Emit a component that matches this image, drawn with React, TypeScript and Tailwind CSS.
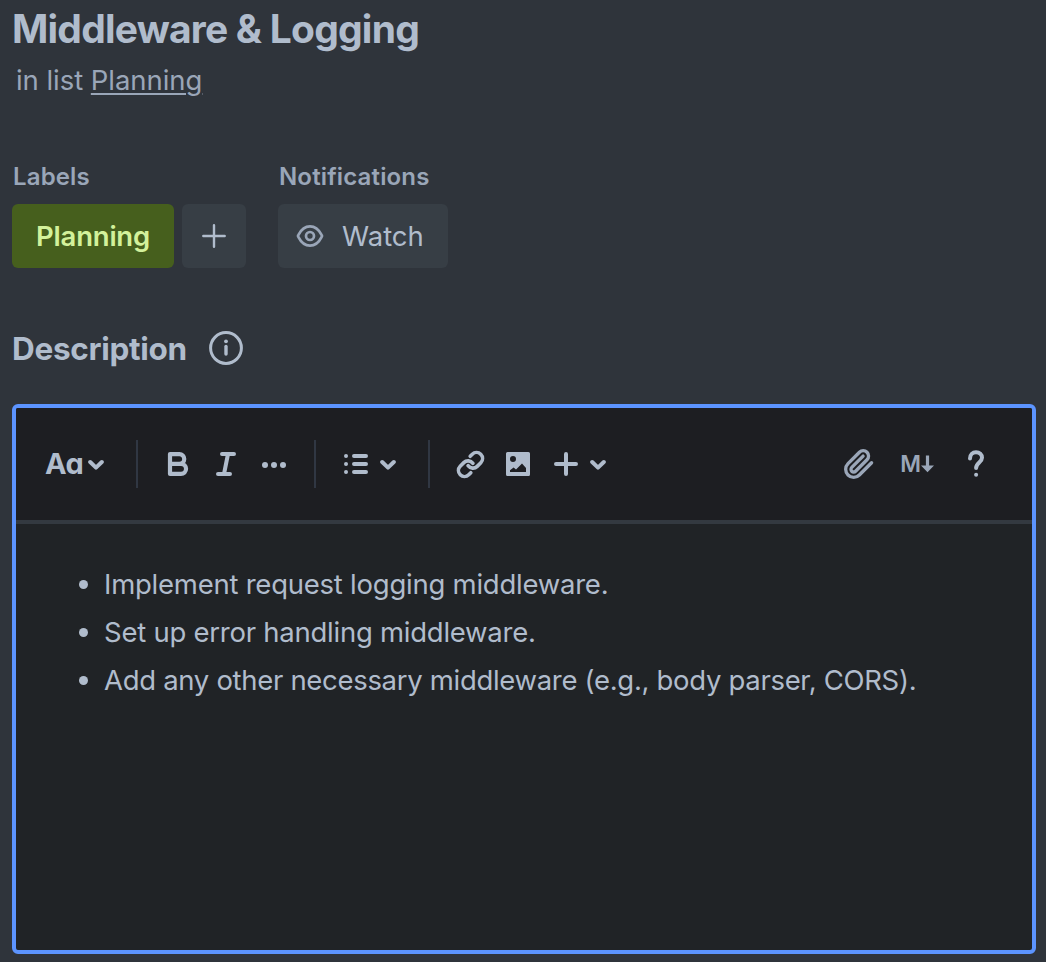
import type { ReactNode } from "react";

function Chevron() {
  return (
    <svg width="16" height="12" viewBox="0 0 16 12" fill="none" className="shrink-0">
      <path d="M2.2 4 L8 9.6 L13.8 4" stroke="currentColor" strokeWidth="4" strokeLinecap="round" strokeLinejoin="round" />
    </svg>
  );
}

function Divider() {
  return <div className="mx-4 h-12 w-0.5 shrink-0 bg-[#303743]" />;
}

function Slot({ children }: { children: ReactNode }) {
  return <button className="flex h-12 w-12 shrink-0 items-center justify-center">{children}</button>;
}

function Toolbar() {
  return (
    <div className="flex h-[116px] items-center border-b-4 border-[#333940] bg-[#1d1e22] pr-8 pl-[18px] text-[#b0bccc]">
      <button className="flex w-[86px] shrink-0 items-center justify-between pr-4 pl-[11px]">
        <span className="text-[29px] leading-8 font-[650] tracking-[-0.6px] [font-feature-settings:'cv11']">Aa</span>
        <Chevron />
      </button>
      <Divider />
      <Slot>
        <svg width="24" height="24" viewBox="0 0 24 24" fill="none" stroke="currentColor" strokeWidth="4.2" strokeLinejoin="round">
          <path d="M4 2.1 H13.4 A4.85 4.85 0 0 1 13.4 11.8 H4 Z M4 11.8 H15 A5.05 5.05 0 0 1 15 21.9 H4 Z" />
        </svg>
      </Slot>
      <Slot>
        <svg width="24" height="24" viewBox="0 0 24 24" fill="none" stroke="currentColor" strokeWidth="4" strokeLinecap="round">
          <path d="M8 2 H20 M4 22 H16 M14 2 L10 22" />
        </svg>
      </Slot>
      <Slot>
        <svg width="26" height="24" viewBox="-1 0 26 24" fill="currentColor">
          <circle cx="3" cy="13" r="3" />
          <circle cx="12" cy="13" r="3" />
          <circle cx="21" cy="13" r="3" />
        </svg>
      </Slot>
      <Divider />
      <button className="flex shrink-0 items-center gap-3 pr-4 pl-3">
        <svg width="24" height="24" viewBox="0 0 24 24" fill="none" stroke="currentColor" strokeWidth="4" strokeLinecap="round">
          <path d="M2 4 H2.01 M2 12 H2.01 M2 20 H2.01 M10 4 H22 M10 12 H22 M10 20 H22" />
        </svg>
        <Chevron />
      </button>
      <Divider />
      <Slot>
        <svg width="29" height="29" viewBox="0 0 24 24" fill="none" stroke="currentColor" strokeWidth="3" strokeLinecap="round" strokeLinejoin="round">
          <path d="M10 13a5 5 0 0 0 7.54.54l3-3a5 5 0 0 0-7.07-7.07l-1.72 1.71" />
          <path d="M14 11a5 5 0 0 0-7.54-.54l-3 3a5 5 0 0 0 7.07 7.07l1.71-1.71" />
        </svg>
      </Slot>
      <Slot>
        <svg width="24" height="24" viewBox="0 0 24 24" fill="currentColor">
          <path fillRule="evenodd" d="M1.5 0 H22.5 Q24 0 24 1.5 V22.5 Q24 24 22.5 24 H1.5 Q0 24 0 22.5 V1.5 Q0 0 1.5 0 Z M7 4 A3 3 0 1 0 7 10 A3 3 0 1 0 7 4 Z M4 20 V18.2 L7.6 15.4 L10 17.6 L16 11.5 L20 16 V20 Z" />
        </svg>
      </Slot>
      <button className="flex shrink-0 items-center gap-3 pl-3">
        <svg width="24" height="24" viewBox="0 0 24 24" fill="none" stroke="currentColor" strokeWidth="4" strokeLinecap="round">
          <path d="M2 12 H22 M12 2 V22" />
        </svg>
        <Chevron />
      </button>
      <div className="ml-auto flex items-center text-[#9aa6b8]">
        <Slot>
          <svg width="32" height="32" viewBox="0 0 24 24" fill="none" stroke="currentColor" strokeWidth="2.5" strokeLinecap="round" strokeLinejoin="round">
            <path d="m21.44 11.05-9.19 9.19a6 6 0 0 1-8.49-8.49l8.57-8.57A4 4 0 1 1 18 8.84l-8.59 8.57a2 2 0 0 1-2.83-2.83l8.49-8.48" />
          </svg>
        </Slot>
        <button className="ml-2.5 flex h-12 w-12 items-center justify-center">
          <span className="text-[22.5px] leading-8 font-semibold tracking-[-0.5px]">M</span>
          <svg width="13" height="18" viewBox="0 0 13 18" fill="currentColor">
            <path d="M4.9 0.5 H8.1 V10.5 H13 L6.5 17.2 L0 10.5 H4.9 Z" />
          </svg>
        </button>
        <button className="ml-[11px] flex h-12 w-12 items-center justify-center text-[#b0bccc]">
          <svg width="16" height="28" viewBox="0 0 16 28" fill="none" stroke="currentColor" strokeWidth="4" strokeLinecap="round" strokeLinejoin="round">
            <path d="M2 8.5 C2 4.4 4.7 2.2 8 2.2 C11.5 2.2 14 4.6 14 7.8 C14 12.4 8.1 12.7 8.1 18" />
            <path d="M8.1 24.7 H8.11" />
          </svg>
        </button>
      </div>
    </div>
  );
}

const items = [
  { text: "Implement request logging middleware.", tracking: "tracking-[-0.24px]" },
  { text: "Set up error handling middleware.", tracking: "tracking-[-0.25px]" },
  { text: "Add any other necessary middleware (e.g., body parser, CORS).", tracking: "tracking-[-0.31px]" },
];

export default function App() {
  return (
    <main className="flex h-[962px] w-[1046px] flex-col overflow-hidden bg-[#2f343b] pr-2.5 pl-3 font-['Inter',sans-serif] text-[#b0bccc]">
      <h1 className="mt-1 h-12 text-[39px] leading-[50px] font-[650] tracking-[-0.78px] whitespace-nowrap">Middleware &amp; Logging</h1>
      <p className="mt-2 h-10 pl-1 text-[27.5px] leading-10 tracking-[-0.05px] whitespace-nowrap text-[#9aa6b8]">
        in list <a className="underline decoration-2 underline-offset-[3px]">Planning</a>
      </p>

      <div className="mt-[60px] flex gap-8">
        <section>
          <h2 className="h-11 pt-px pl-px text-[24px] leading-8 font-semibold tracking-[0.15px] text-[#9aa6b8]">Labels</h2>
          <div className="flex gap-2">
            <button className="flex h-16 w-[162px] items-center justify-center rounded-md bg-[#465f1d] pt-0.5 text-[27.5px] font-semibold tracking-[-0.2px] text-[#d3f19b]">Planning</button>
            <button className="flex h-16 w-16 items-center justify-center rounded-md bg-[#373e45]">
              <svg width="24" height="24" viewBox="0 0 24 24" stroke="currentColor" strokeWidth="2.4" strokeLinecap="round">
                <path d="M1.3 12 H22.7 M12 1.3 V22.7" />
              </svg>
            </button>
          </div>
        </section>
        <section>
          <h2 className="h-11 pt-px pl-px text-[24px] leading-8 font-semibold tracking-[0.15px] text-[#9aa6b8]">Notifications</h2>
          <button className="flex h-16 w-[170px] items-center gap-[18px] rounded-md bg-[#373e45] pl-[18px] text-[27.5px]">
            <svg width="28" height="24" viewBox="0 0 28 24" fill="none" stroke="#9aa6b8" strokeWidth="2.7">
              <path d="M2.6 13.3 C1.9 12.5 1.9 11.5 2.6 10.7 C5.4 5.2 9.2 2.4 14 2.4 C18.8 2.4 22.6 5.2 25.4 10.7 C26.1 11.5 26.1 12.5 25.4 13.3 C22.6 18.8 18.8 21.6 14 21.6 C9.2 21.6 5.4 18.8 2.6 13.3 Z" />
              <circle cx="14" cy="12" r="4" />
            </svg>
            <span className="pt-0.5">Watch</span>
          </button>
        </section>
      </div>

      <div className="mt-[60px] flex h-10 items-center gap-[21px]">
        <h2 className="pt-0.5 text-[31.5px] leading-10 font-[650] tracking-[-0.3px]">Description</h2>
        <svg width="36" height="36" viewBox="0 0 36 36" fill="none" stroke="currentColor" strokeLinecap="round">
          <circle cx="18" cy="18" r="15.4" strokeWidth="3" />
          <path d="M18 16.5 V24" strokeWidth="3.4" />
          <path d="M18 11.3 H18.01" strokeWidth="3.8" />
        </svg>
      </div>

      <div className="mt-9 flex h-[550px] shrink-0 flex-col overflow-hidden rounded-md border-4 border-[#5c94ff] bg-[#202326]">
        <Toolbar />
        <ul className="pt-9 pl-[63px]">
          {items.map((item) => (
            <li key={item.text} className="flex h-12 items-center gap-4">
              <span className="h-[9px] w-[9px] shrink-0 rounded-full bg-[#b0bccc]" />
              <span className={`text-[27.5px] leading-[48px] whitespace-nowrap ${item.tracking}`}>{item.text}</span>
            </li>
          ))}
        </ul>
      </div>
    </main>
  );
}
